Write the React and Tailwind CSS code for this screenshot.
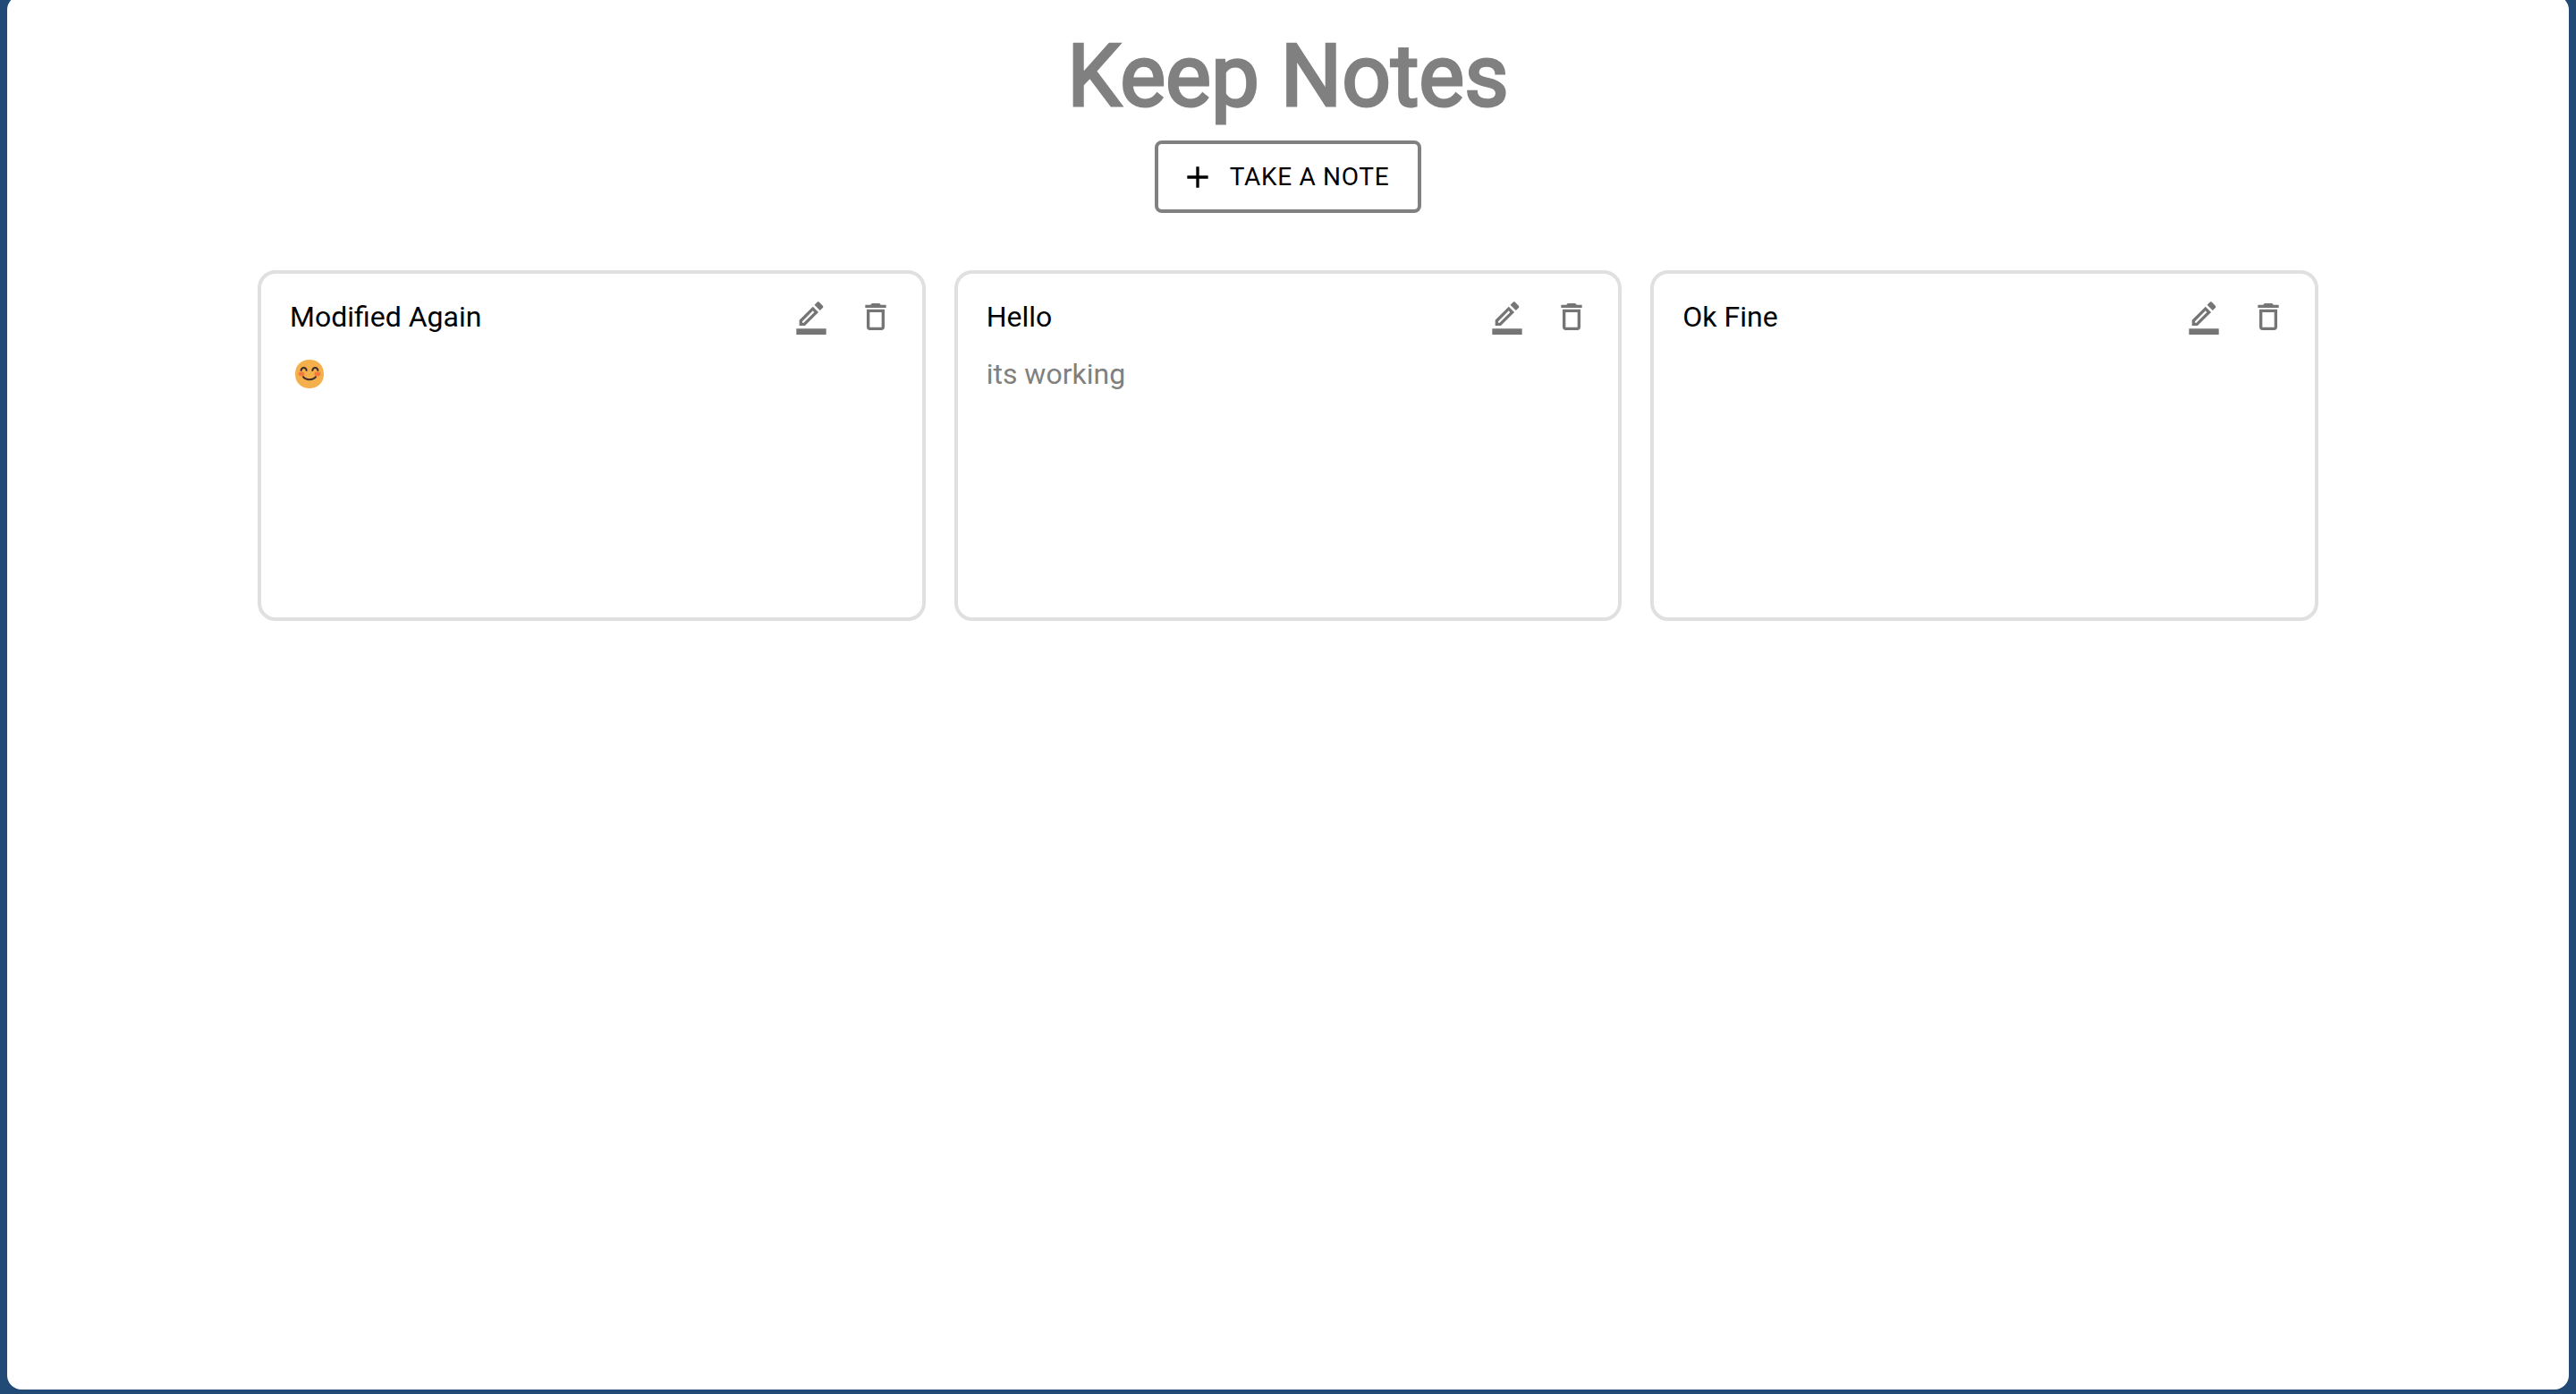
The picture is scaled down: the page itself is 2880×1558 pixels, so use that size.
const notes = [
  { title: 'Modified Again', emoji: true },
  { title: 'Hello', body: 'its working' },
  { title: 'Ok Fine' },
];

function PlusIcon() {
  return (
    <svg viewBox="0 0 24 24" className="size-10 fill-current" aria-hidden="true">
      <path d="M19 13h-6v6h-2v-6H5v-2h6V5h2v6h6v2z" />
    </svg>
  );
}

function EditIcon() {
  return (
    <svg viewBox="0 0 24 24" className="size-10 fill-current" aria-hidden="true">
      <path d="M16.81 8.94l-3.75-3.75L4 14.25V18h3.75l9.06-9.06zM6 16v-.92l7.06-7.06.92.92L6.92 16H6zM19.71 6.04c.39-.39.39-1.02 0-1.41l-2.34-2.34c-.2-.2-.45-.29-.71-.29-.25 0-.51.1-.7.29l-1.83 1.83 3.75 3.75 1.83-1.83zM2 20h20v4H2z" />
    </svg>
  );
}

function TrashIcon() {
  return (
    <svg viewBox="0 0 24 24" className="size-10 fill-current" aria-hidden="true">
      <path d="M6 19c0 1.100.9 2 2 2h8c1.100 0 2-.9 2-2V7H6v12zM8 9h8v10H8V9zm7.500-5l-1-1h-5l-1 1H5v2h14V4z" />
    </svg>
  );
}

function SmileEmoji() {
  return (
    <svg viewBox="0 0 32 32" className="mx-1.5 size-8" role="img" aria-label="smiling face">
      <path d="M16 0C25 0 32 6 32 16S25 32 16 32 0 26 0 16 7 0 16 0z" fill="#f3b04b" />
      <ellipse cx="7" cy="16" rx="3.400" ry="2.400" fill="#f27a3e" />
      <ellipse cx="25" cy="16" rx="3.400" ry="2.400" fill="#f27a3e" />
      <g fill="none" stroke="#3b2a30" strokeWidth="2" strokeLinecap="round">
        <path d="M6.600 11.900C7.300 7.900 12 7.900 12.700 11.900" />
        <path d="M19.300 11.900C20 7.900 24.700 7.900 25.400 11.900" />
        <path d="M9 19.200C12 23.300 20 23.300 23 19.200" />
      </g>
    </svg>
  );
}

function NoteCard({ note }) {
  return (
    <article className="flex min-h-98 flex-col rounded-[20px] border-4 border-[#e0e0e0] py-3">
      <header className="flex items-center justify-between pr-4 pl-8">
        <h2 className="text-[32px] leading-12">{note.title}</h2>
        <div className="flex text-[#757575]">
          <button type="button" aria-label={`Edit ${note.title}`} className="rounded-full p-4">
            <EditIcon />
          </button>
          <button type="button" aria-label={`Delete ${note.title}`} className="rounded-full p-4">
            <TrashIcon />
          </button>
        </div>
      </header>
      <div className="mt-1 flex min-h-12 items-center px-8 text-[32px] leading-12 text-[#808080]">
        {note.emoji ? <SmileEmoji /> : <p>{note.body}</p>}
      </div>
    </article>
  );
}

export default function App() {
  return (
    <div className="h-screen overflow-hidden bg-[#224a77] px-2 pb-[5px] font-['Roboto',sans-serif] text-black">
      <main className="-mt-[5px] min-h-screen rounded-2xl bg-white px-[280px] pt-7">
        <div className="flex flex-col items-center">
          <h1 className="mb-2.5 text-8xl leading-[124px] font-normal text-[#808080] [-webkit-text-stroke:3px_#808080]">
            Keep Notes
          </h1>
          <button
            type="button"
            className="flex items-center gap-4 rounded-lg border-4 border-[#808080] py-4 pr-8 pl-6 text-[28px] leading-[41px] tracking-wide uppercase"
          >
            <PlusIcon />
            Take a note
          </button>
        </div>
        <section aria-label="Notes" className="mt-16 grid grid-cols-3 gap-8">
          {notes.map((note) => (
            <NoteCard key={note.title} note={note} />
          ))}
        </section>
      </main>
    </div>
  );
}
